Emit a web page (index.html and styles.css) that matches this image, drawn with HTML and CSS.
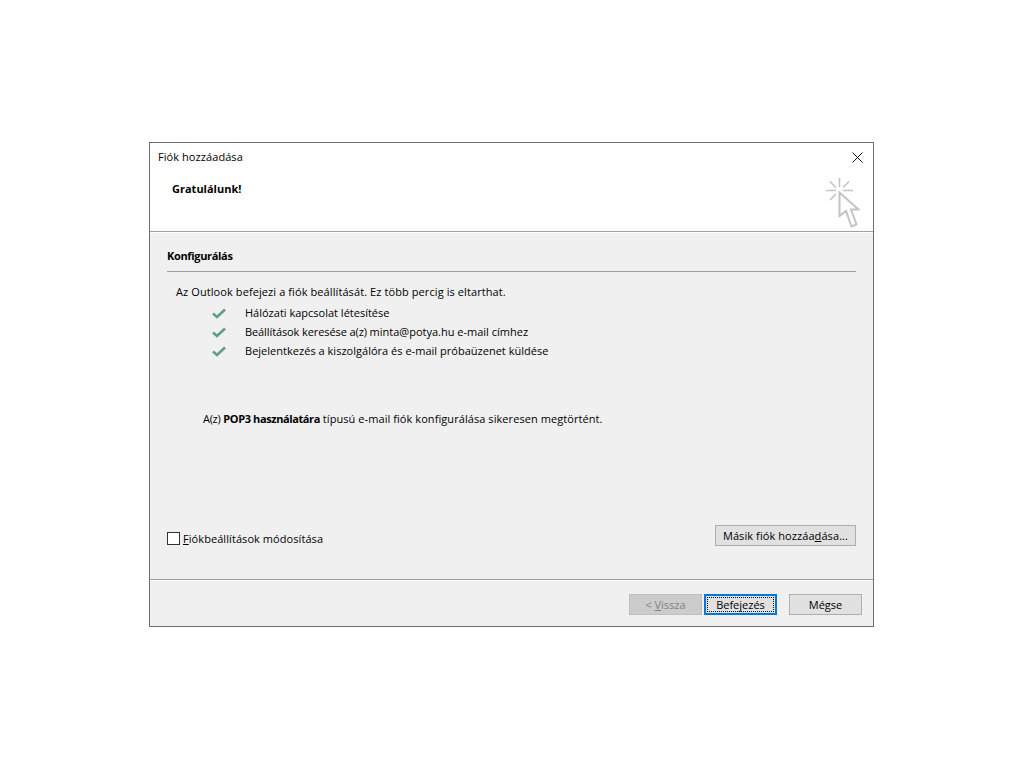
FILE: index.html
```html
<!DOCTYPE html>
<html lang="hu">
<head>
<meta charset="utf-8">
<title>Fiók hozzáadása</title>
<link rel="stylesheet" href="styles.css">
</head>
<body>
<div class="dialog">
  <header class="head">
    <div class="titlebar">
      <span class="title">Fiók hozzáadása</span>
      <svg class="close" width="11" height="11" viewBox="0 0 11 11"><path d="M0.5 0.5L10.5 10.5M10.5 0.5L0.5 10.5" stroke="#111" stroke-width="1" fill="none"/></svg>
    </div>
    <div class="headline">
      <strong class="congrats">Gratulálunk!</strong>
      <svg class="cursor" width="34" height="50" viewBox="0 0 34 50">
        <g stroke="#c4c4c4" stroke-width="1.6" fill="none">
          <path d="M13.5 0V9M0 12.5H10M17 12.5H27M4 3.5L10 9.5M23 3.5L17 9.5M4 22L10 16"/>
          <path d="M13.5 14.5V38L20 33L25.5 48.5L30.5 46.5L25 31.5H32.5Z" stroke-width="2" stroke-linejoin="miter"/>
        </g>
      </svg>
    </div>
  </header>
  <main class="body">
    <h2 class="section">Konfigurálás</h2>
    <p class="intro">Az Outlook befejezi a fiók beállítását. Ez több percig is eltarthat.</p>
    <ul class="steps">
      <li class="step"><svg class="check" width="14" height="11" viewBox="0 0 14 11"><path d="M1 5.5L5 9L13 1.5" stroke="#5f9f8d" stroke-width="2.6" fill="none"/></svg><span>Hálózati kapcsolat létesítése</span></li>
      <li class="step"><svg class="check" width="14" height="11" viewBox="0 0 14 11"><path d="M1 5.5L5 9L13 1.5" stroke="#5f9f8d" stroke-width="2.6" fill="none"/></svg><span><span class="tight">Beállítások keresése a(z) </span>minta@potya.hu e-mail címhez</span></li>
      <li class="step"><svg class="check" width="14" height="11" viewBox="0 0 14 11"><path d="M1 5.5L5 9L13 1.5" stroke="#5f9f8d" stroke-width="2.6" fill="none"/></svg><span class="wide-s">Bejelentkezés a kiszolgálóra és e-mail próbaüzenet küldése</span></li>
    </ul>
    <p class="result"><span class="narrow">A(z)</span> <b>POP3 használatára</b> típusú e-mail fiók konfigurálása sikeresen megtörtént.</p>
    <div class="options">
      <label class="option"><span class="box"></span><span><u>F</u>iókbeállítások módosítása</span></label>
      <button class="btn more">Másik fiók hozzáa<u>d</u>ása...</button>
    </div>
  </main>
  <footer class="foot">
    <button class="btn nav disabled">&lt; <u>V</u>issza</button>
    <button class="btn nav default"><span class="focus">Befejezés</span></button>
    <button class="btn nav cancel">Mégse</button>
  </footer>
</div>
</body>
</html>
```
FILE: styles.css
```css
* { box-sizing: border-box; }
html, body { margin: 0; height: 100%; background: #fff; }
body {
  padding: 142px 0 0 149px;
  font-family: "Open Sans", "Noto Sans", sans-serif;
  font-size: 11px;
  color: #000;
}
.dialog {
  width: 725px;
  height: 485px;
  border: 1px solid #6e6e6e;
  background: #f0f0f0;
  display: flex;
  flex-direction: column;
}
.head {
  height: 89px;
  background: #fff;
  border-bottom: 1px solid #a0a0a0;
  flex: none;
}
.titlebar {
  display: flex;
  justify-content: space-between;
  align-items: center;
  padding: 3px 10px 0 8px;
  height: 24px;
}
.title { font-size: 11px; line-height: 15px; letter-spacing: 0.07px; }
.close { margin-top: 2px; }
.headline {
  display: flex;
  justify-content: space-between;
  align-items: flex-start;
  padding: 0 13px 0 22px;
  height: 63px;
}
.congrats { font-size: 11px; line-height: 15px; margin-top: 14px; }
.cursor { margin-top: 11px; }
.body {
  flex: 1;
  padding: 15px 17px 0 17px;
  display: flex;
  flex-direction: column;
  border-top: 1px solid #fff;
  border-bottom: 1px solid #a0a0a0;
}
.section {
  margin: 0;
  font-size: 11px;
  line-height: 15px;
  padding-bottom: 8px;
  border-bottom: 1px solid #a0a0a0;
  font-weight: 700;
  letter-spacing: -0.33px;
}
.intro { margin: 12px 0 0 9px; line-height: 15px; letter-spacing: 0.09px; }
.steps { list-style: none; margin: 4px 0 0; padding: 0 0 0 45px; }
.step { display: flex; align-items: center; height: 19px; }
.check { margin: 2px 19px 0 0; flex: none; }
.tight { letter-spacing: -0.1px; }
.wide-s { letter-spacing: 0.02px; }
.result { margin: 51px 0 0 36px; line-height: 15px; letter-spacing: 0.07px; }
.result b { letter-spacing: -0.4px; }
.narrow { letter-spacing: -0.3px; }
.options {
  margin-top: auto;
  margin-bottom: 33px;
  display: flex;
  justify-content: space-between;
  align-items: center;
}
.option { display: flex; align-items: center; gap: 3px; margin-top: 6px; letter-spacing: 0.07px; }
.box { width: 13px; height: 13px; border: 1px solid #333; background: #fff; }
.btn {
  font: inherit;
  color: #000;
  background: #e1e1e1;
  border: 1px solid #adadad;
  padding: 0;
  height: 21px;
}
.more { width: 141px; letter-spacing: 0.08px; }
.foot {
  height: 46px;
  flex: none;
  display: flex;
  justify-content: flex-end;
  align-items: flex-start;
  padding: 13px 11px 0 0;
  border-top: 1px solid #fff;
}
.nav { width: 73px; }
.disabled { background: #ccc; color: #838383; border-color: #bfbfbf; }
.default { border: 2px solid #0078d7; padding: 1px; margin-left: 2px; }
.focus { display: block; height: 100%; line-height: 13px; border: 1px dotted #111; }
.cancel { margin-left: 12px; }
```
